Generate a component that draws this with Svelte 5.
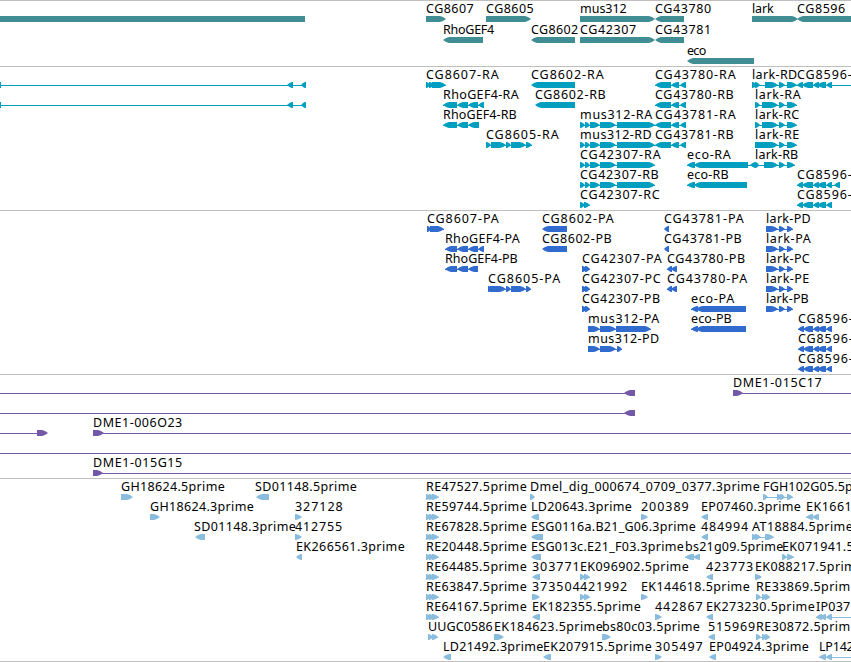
<!--
  Genome browser panel: stacked tracks of genes, transcripts, proteins,
  BAC ends and ESTs. Every track is a column of rows, and every row is one
  strip of labelled, strand-aware features in panel coordinates.
-->
<script>
  const WIDTH = 851;
  // Far enough outside the panel that the feature runs off its edge.
  const LEFT = -20;
  const RIGHT = 880;

  // Exon layouts that several features share.
  const CG43780_R = [[655, 671], [671, 679], [680, 686]];
  const MUS312_R = [[580, 585], [585, 590], [590, 600], [600, 616], [617, 655]];
  const LARK_R = [[755, 760], [762, 778], [779, 785], [787, 797]];
  const LARK_P = [[766, 778], [779, 785], [787, 793]];
  const RHO_R = [[443, 457], [457, 468], [468, 479]];
  const CG8605_R = [[486, 491], [491, 506], [506, 511], [511, 526], [526, 532]];
  const CG8596_R = [[797, 803], [802, 813], [813, 819], [817, 826], [826, 832]];
  const CG8596_P = [[798, 804], [803, 813], [813, 819], [817, 826], [826, 832]];
  const PAIR = [[580, 585], [584, 590]];
  const TRIPLE = [[426, 431], [429, 435], [432, 439]];
  const RE_LATE = [[756, 761], [762, 767], [765, 770]];

  // label, label start, label end, strand, exons, optional intron extent
  const f = (label, x, end, strand, exons, span) => ({ label, x, end, strand, exons, span });

  const tracks = [
    {
      name: 'genes',
      rows: [
        [
          f('', 0, 0, '-', [[LEFT, 305]]),
          f('CG8607', 426, 474, '+', [[426, 446]]),
          f('CG8605', 486, 534, '+', [[486, 531]]),
          f('mus312', 580, 627, '+', [[580, 655]]),
          f('CG43780', 655, 711.5, '-', [[655, 684]]),
          f('lark', 752, 774, '+', [[752, 798]]),
          f('CG8596', 797, 845.5, '-', [[797, RIGHT]])
        ],
        [
          f('RhoGEF4', 443, 494.5, '-', [[443, 483]]),
          f('CG8602', 531, 578.5, '-', [[531, 575]]),
          f('CG42307', 580, 636.5, '+', [[580, 655]]),
          f('CG43781', 655, 711.5, '-', [[655, 684]])
        ],
        [f('eco', 687, 706.5, '-', [[687, 754]])]
      ]
    },
    {
      name: 'transcripts',
      rows: [
        [
          f('', 0, 0, '-', [[-5, 1], [287, 293], [301, 306]]),
          f('CG8607-RA', 426, 499, '+', [[426, 430], [429, 434], [432, 446]]),
          f('CG8602-RA', 531, 604, '-', [[531, 575]]),
          f('CG43780-RA', 655, 736, '-', CG43780_R),
          f('lark-RD', 752, 797.5, '+', [[752, 757], [755, 760], [765, 778], [779, 785], [787, 797]]),
          f('CG8596-', 797, 852, '-', CG8596_R, [797, RIGHT])
        ],
        [
          f('', 0, 0, '-', [[-5, 1], [287, 293], [301, 306]]),
          f('RhoGEF4-RA', 443, 519, '-', [[443, 457], [457, 468], [468, 478], [478, 484]]),
          f('CG8602-RB', 535, 606, '-', [[535, 575]]),
          f('CG43780-RB', 655, 734, '-', CG43780_R),
          f('lark-RA', 755, 801, '+', LARK_R)
        ],
        [
          f('RhoGEF4-RB', 443, 517, '-', RHO_R),
          f('mus312-RA', 580, 652.5, '+', MUS312_R),
          f('CG43781-RA', 655, 736, '-', CG43780_R),
          f('lark-RC', 755, 799.5, '+', LARK_R)
        ],
        [
          f('CG8605-RA', 486, 559, '+', CG8605_R),
          f('mus312-RD', 580, 652, '+', MUS312_R),
          f('CG43781-RB', 655, 734, '-', CG43780_R),
          f('lark-RE', 755, 799.5, '+', [[755, 778], [779, 785], [787, 797]])
        ],
        [
          f('CG42307-RA', 580, 661, '+', MUS312_R),
          f('eco-RA', 687, 731, '-', [[687, 695], [694, 748], [750, 756]]),
          f('lark-RB', 755, 798.5, '+', [[755, 759], [764, 778], [779, 785], [787, 795]])
        ],
        [
          f('CG42307-RB', 580, 659, '+', MUS312_R),
          f('eco-RB', 687, 729, '-', [[687, 695], [694, 747]]),
          f('CG8596-', 797, 852, '-', [...CG8596_R, [834, 840]])
        ],
        [
          f('CG42307-RC', 580, 660, '+', PAIR),
          f('CG8596-', 797, 852, '-', CG8596_R)
        ]
      ]
    },
    {
      name: 'proteins',
      rows: [
        [
          f('CG8607-PA', 427, 499, '+', [[427, 431], [430, 444]]),
          f('CG8602-PA', 542, 614, '-', [[542, 567]]),
          f('CG43781-PA', 664, 744, '-', [[664, 669]]),
          f('lark-PD', 766, 811, '+', LARK_P)
        ],
        [
          f('RhoGEF4-PA', 445, 520, '-', [[445, 457], [457, 468], [468, 478], [478, 484]]),
          f('CG8602-PB', 542, 612, '-', [[542, 567]]),
          f('CG43781-PB', 664, 742, '-', [[664, 669]]),
          f('lark-PA', 766, 811, '+', LARK_P)
        ],
        [
          f('RhoGEF4-PB', 445, 518, '-', [[445, 457], [457, 468], [468, 478]]),
          f('CG42307-PA', 582, 662, '+', [[582, 587], [585, 590]]),
          f('CG43780-PB', 667, 745.5, '-', [[667, 672], [671, 677]]),
          f('lark-PC', 766, 810, '+', LARK_P)
        ],
        [
          f('CG8605-PA', 488, 560.5, '+', [[488, 492], [490, 506], [506, 511], [511, 526], [526, 531]]),
          f('CG42307-PC', 582, 661, '+', [[582, 587], [585, 590]]),
          f('CG43780-PA', 667, 747.5, '-', [[667, 672], [671, 677]]),
          f('lark-PE', 766, 809.5, '+', LARK_P)
        ],
        [
          f('CG42307-PB', 582, 660.5, '+', [[582, 587], [585, 590]]),
          f('eco-PA', 691, 734.5, '-', [[691, 698], [696, 746]]),
          f('lark-PB', 766, 809, '+', LARK_P)
        ],
        [
          f('mus312-PA', 588, 659.5, '+', [[588, 600], [600, 616], [616, 651]]),
          f('eco-PB', 691, 732, '-', [[691, 698], [696, 746]]),
          f('CG8596-', 798, 853, '-', CG8596_P)
        ],
        [
          f('mus312-PD', 588, 659.5, '+', [[588, 600], [600, 616], [617, 622]]),
          f('CG8596-', 798, 853, '-', CG8596_P)
        ],
        [f('CG8596-', 798, 853, '-', CG8596_P)]
      ]
    },
    {
      name: 'bacs',
      rows: [
        [
          f('', 0, 0, '-', [[624, 635]], [LEFT, 635]),
          f('DME1-015C17', 733, 822, '+', [[733, 743]], [733, RIGHT])
        ],
        [f('', 0, 0, '-', [[624, 635]], [LEFT, 635])],
        [
          f('', 0, 0, '+', [[37, 48]], [LEFT, 40]),
          f('DME1-006O23', 93, 182.5, '+', [[93, 104]], [93, RIGHT])
        ],
        [f('', 0, 0, '+', [], [LEFT, RIGHT])],
        [f('DME1-015G15', 93, 182.5, '+', [[93, 103]], [93, RIGHT])]
      ]
    },
    {
      name: 'ests',
      rows: [
        [
          f('GH18624.5prime', 121, 225, '+', [[121, 133]]),
          f('SD01148.5prime', 255, 357, '-', [[256, 269]]),
          f('RE47527.5prime', 426, 527, '+', TRIPLE),
          f('Dmel_dig_000674_0709_0377.3prime', 530, 760, '+', [[530, 535]]),
          f('FGH102G05.5p', 763, 853, '+', [[763, 768], [777, 782], [780, 785], [787, 793]])
        ],
        [
          f('GH18624.3prime', 150, 254, '+', [[150, 160]]),
          f('327128', 295, 343, '+', [[295, 302]]),
          f('RE59744.5prime', 426, 527, '+', TRIPLE),
          f('LD20643.3prime', 531, 632, '-', [[531, 539]]),
          f('200389', 641, 689, '+', [[641, 648]]),
          f('EP07460.3prime', 701, 801, '-', [[701, 708]]),
          f('EK1661', 806, 852, '-', [[806, 813], [812, 819]])
        ],
        [
          f('SD01148.3prime', 194, 296, '-', [[195, 205]]),
          f('412755', 295, 342.5, '+', [[295, 302]]),
          f('RE67828.5prime', 426, 527, '+', TRIPLE),
          f('ESG0116a.B21_G06.3prime', 531, 696, '-', [[531, 543]]),
          f('484994', 701, 748.5, '-', [[701, 708]]),
          f('AT18884.5prime', 752, 853, '+', [[752, 757], [755, 761], [765, 774]])
        ],
        [
          f('EK266561.3prime', 296, 405, '-', [[296, 302]]),
          f('RE20448.5prime', 426, 527, '+', TRIPLE),
          f('ESG013c.E21_F03.3prime', 531, 684, '-', [[531, 541]]),
          f('bs21g09.5prime', 685, 783.5, '-', [[685, 694], [693, 700]]),
          f('EK071941.5', 782, 854, '+', [[782, 787], [787, 794]])
        ],
        [
          f('RE64485.5prime', 426, 527, '+', TRIPLE),
          f('303771', 532, 580, '-', [[532, 540]]),
          f('EK096902.5prime', 580, 689, '+', PAIR),
          f('423773', 706, 753.5, '-', [[706, 713]]),
          f('EK088217.5prim', 755, 856, '+', [[755, 762]])
        ],
        [
          f('RE63847.5prime', 426, 527, '+', TRIPLE),
          f('373504', 532, 580, '+', [[532, 540]]),
          f('421992', 580, 627.5, '+', PAIR),
          f('EK144618.5prime', 641, 750, '+', [[641, 648]]),
          f('RE33869.5prim', 756, 850.5, '+', RE_LATE)
        ],
        [
          f('RE64167.5prime', 426, 527, '+', TRIPLE),
          f('EK182355.5prime', 532, 641, '-', [[532, 540]]),
          f('442867', 655, 703, '+', [[655, 662]]),
          f('EK273230.5prime', 706, 815, '-', [[706, 713]]),
          f('IP037', 816, 850.5, '-', [[816, 822], [820, 826], [826, 832]], [816, RIGHT])
        ],
        [
          f('UUGC0586', 428, 493, '+', [[428, 433], [432, 438]]),
          f('EK184623.5prime', 494, 603, '+', [[494, 504]]),
          f('bs80c03.5prime', 602, 700, '+', [[602, 611]]),
          f('515969', 708, 755.5, '-', [[708, 715]]),
          f('RE30872.5prim', 756, 850.5, '+', RE_LATE)
        ],
        [
          f('LD21492.3prime', 443, 543.5, '-', [[443, 451]]),
          f('EK207915.5prime', 543, 652, '-', [[543, 551]]),
          f('305497', 655, 703, '+', [[655, 662]]),
          f('EP04924.3prime', 709, 809, '-', [[709, 716]]),
          f('LP142', 819, 854, '-', [[819, 826], [826, 832]], [819, RIGHT])
        ]
      ]
    }
  ];

  // A block that tapers to a point on its downstream end. Short exons keep
  // a sliver of full height so they stay readable.
  function arrow([a, b], strand) {
    const head = Math.min(b - a - 1, 6);
    const mid = head / 2;
    if (strand === '+') {
      return `M${a} 15H${b - head}L${b - mid} 16L${b} 18L${b - mid} 20L${b - head} 21H${a}Z`;
    }
    return `M${b} 15H${a + head}L${a + mid} 16L${a} 18L${a + mid} 20L${a + head} 21H${b}Z`;
  }

  function intron({ exons, span }) {
    const [a, b] = span ?? [exons[0][0], exons[exons.length - 1][1]];
    return `M${a} 18.5H${b}`;
  }
</script>

<main class="browser">
  {#each tracks as track (track.name)}
    <section class="track {track.name}">
      {#each track.rows as row}
        <svg class="row" viewBox="0 0 {WIDTH} 20">
          {#each row as feature}
            {#if feature.span || feature.exons.length > 1}
              <path class="intron" d={intron(feature)} />
            {/if}
            {#each feature.exons as exon}
              <path class="exon" d={arrow(exon, feature.strand)} />
            {/each}
            {#if feature.label}
              <text x={feature.x} y="12" textLength={feature.end - feature.x - 0.25}>{feature.label}</text>
            {/if}
          {/each}
        </svg>
      {/each}
    </section>
  {/each}
</main>

<style>
  :global(body) {
    margin: 0;
    background: #fff;
  }

  .browser {
    width: 851px;
    height: 662px;
    box-sizing: border-box;
    display: flex;
    flex-direction: column;
    overflow: hidden;
    background: #fff;
    border-bottom: 1px solid #bfbfbf;
  }

  .track {
    display: flex;
    flex-direction: column;
    flex: none;
    padding-bottom: 3px;
    border-top: 1px solid #bfbfbf;
  }

  .row {
    display: block;
    flex: none;
    width: 851px;
    height: 20px;
    overflow: visible;
  }

  .exon {
    fill: var(--ink);
  }

  .intron {
    fill: none;
    stroke: var(--ink);
    stroke-width: 1;
  }

  text {
    font-family: "Noto Sans", "Open Sans", sans-serif;
    font-size: 12.5px;
    fill: #000;
  }

  .genes {
    --ink: #408e94;
    gap: 1px;
  }

  .transcripts {
    --ink: #009fc0;
  }

  .proteins {
    --ink: #316bce;
  }

  .bacs {
    --ink: #7458a8;
  }

  .ests {
    --ink: #8abcde;
    padding-bottom: 2px;
  }
</style>
